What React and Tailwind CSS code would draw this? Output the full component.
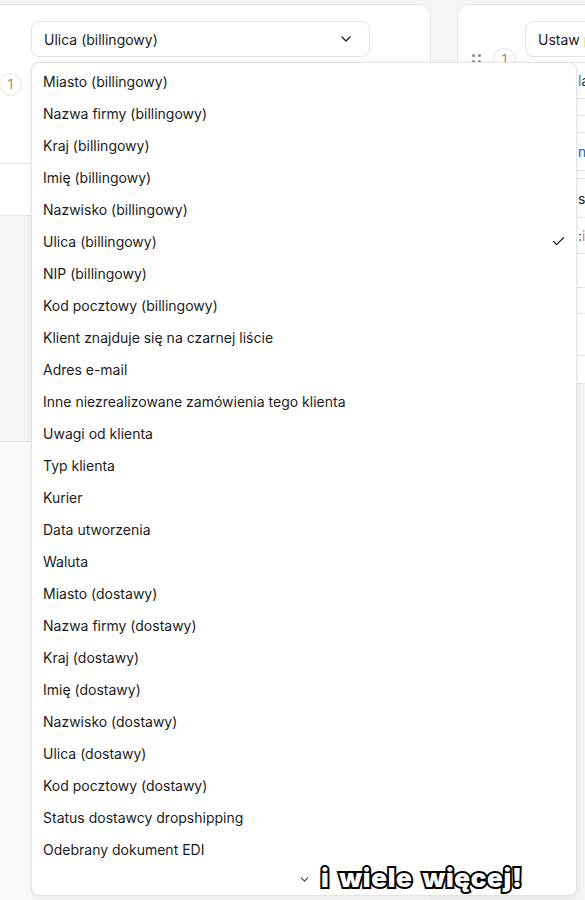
import { ChevronDown, Check } from 'lucide-react';

const options = [
  'Miasto (billingowy)',
  'Nazwa firmy (billingowy)',
  'Kraj (billingowy)',
  'Imię (billingowy)',
  'Nazwisko (billingowy)',
  'Ulica (billingowy)',
  'NIP (billingowy)',
  'Kod pocztowy (billingowy)',
  'Klient znajduje się na czarnej liście',
  'Adres e-mail',
  'Inne niezrealizowane zamówienia tego klienta',
  'Uwagi od klienta',
  'Typ klienta',
  'Kurier',
  'Data utworzenia',
  'Waluta',
  'Miasto (dostawy)',
  'Nazwa firmy (dostawy)',
  'Kraj (dostawy)',
  'Imię (dostawy)',
  'Nazwisko (dostawy)',
  'Ulica (dostawy)',
  'Kod pocztowy (dostawy)',
  'Status dostawcy dropshipping',
  'Odebrany dokument EDI',
];

const selected = 'Ulica (billingowy)';

// rows of the table peeking out on the right, behind the menu
const rightRows = [
  { h: 'h-[36px]', text: <><span className="text-[#2f7fd6]">l</span>a</> },
  { h: 'h-[17px]', text: null },
  { h: 'h-[17px]', text: null },
  { h: 'h-[38px]', text: <span className="text-[#1f5fae]">n</span> },
  { h: 'h-[8px]', text: null },
  { h: 'h-[39px]', text: 's' },
  { h: 'h-[36px]', text: <><span className="text-[#2458c4]">:</span> <span className="text-[#e08a2c]">i</span></> },
  { h: 'h-[34px]', text: null },
  { h: 'h-[26px]', text: null },
  { h: 'h-[42px]', text: null },
];

function NumberBadge({ className = '' }) {
  return (
    <div className={`w-[23px] h-[23px] rounded-full border border-[#e3e3e3] bg-white flex items-center justify-center text-[13px] text-[#a88466] ${className}`}>
      1
    </div>
  );
}

export default function App() {
  return (
    <div className="relative w-[585px] h-[900px] overflow-hidden bg-[#f5f5f5] text-[#1c1c1c] font-['Inter','Noto_Sans',sans-serif]">
      <div className="flex gap-[26px]">
        {/* Left column */}
        <div className="w-[431px] shrink-0 pt-1">
          <div className="-ml-4 w-[447px] h-[212px] bg-white border border-[#e6e6e6] rounded-xl">
            <div className="h-[158px] pl-[14px] pt-4 grid grid-cols-[23px_1fr] gap-x-[9px] gap-y-[16px] content-start">
              <div />
              <button className="w-[339px] h-[36px] rounded-lg border border-[#e3e3e3] bg-white flex items-center justify-between pl-3 pr-[15px] text-[14px]">
                <span>Ulica (billingowy)</span>
                <ChevronDown className="w-4 h-4 text-[#222]" strokeWidth={2} />
              </button>
              <NumberBadge />
            </div>
            <div className="border-t border-[#e6e6e6]" />
          </div>
          <div className="mt-[225px] -ml-4 h-[500px] border-t border-[#e6e6e6] bg-[#f9f9f9]" />
        </div>

        {/* Right column */}
        <div className="pt-1 shrink-0">
          <div className="w-[260px] h-[380px] bg-white border border-[#e6e6e6] rounded-xl flex">
            <div className="w-[67px] shrink-0 pt-[43px] pl-[14px] flex items-start gap-[12px]">
              <div className="grid grid-cols-2 gap-x-[3px] gap-y-[3px] mt-[6px]">
                <span className="w-[3px] h-[3px] rounded-full bg-[#888]" />
                <span className="w-[3px] h-[3px] rounded-full bg-[#888]" />
                <span className="w-[3px] h-[3px] rounded-full bg-[#888]" />
                <span className="w-[3px] h-[3px] rounded-full bg-[#888]" />
                <span className="w-[3px] h-[3px] rounded-full bg-[#888]" />
                <span className="w-[3px] h-[3px] rounded-full bg-[#888]" />
              </div>
              <NumberBadge />
            </div>
            <div className="flex-1 pt-4">
              <button className="w-[200px] h-[36px] rounded-lg border border-[#e3e3e3] bg-white flex items-center pl-3 text-[14px] whitespace-nowrap">
                Ustaw <span className="ml-1 text-[#e7a23a]">pole</span>
              </button>
              <div className="mt-[5px] border-t border-[#e6e6e6]">
                {rightRows.map((r, i) => (
                  <div key={i} className={`${r.h} border-b border-[#e6e6e6] flex items-center pl-[53px] text-[14px] whitespace-nowrap overflow-hidden`}>
                    {r.text}
                  </div>
                ))}
              </div>
            </div>
          </div>
        </div>
      </div>

      {/* Open select menu */}
      <div className="absolute left-[31px] top-[62px] w-[546px] h-[834px] bg-white border border-[#e3e3e3] rounded-lg shadow-[0_2px_6px_rgba(0,0,0,0.08)]">
        <ul className="pt-[2px]">
          {options.map((o) => (
            <li key={o} className="h-8 flex items-center justify-between pl-[11px] pr-[10px] text-[14px] text-[#1c1c1c]">
              <span>{o}</span>
              {o === selected && <Check className="w-[15px] h-[15px] text-[#222]" strokeWidth={2} />}
            </li>
          ))}
        </ul>
        <div className="relative h-[28px] flex items-center justify-center">
          <ChevronDown className="w-[13px] h-[13px] text-[#444]" strokeWidth={2} />
          <span className="absolute left-[289px] top-[-2px] text-[26px] leading-[30px] font-black tracking-[0.7px] [word-spacing:4px] text-white [-webkit-text-stroke:4px_#000] [paint-order:stroke_fill] whitespace-nowrap">
            i wiele więcej!
          </span>
        </div>
      </div>
    </div>
  );
}
